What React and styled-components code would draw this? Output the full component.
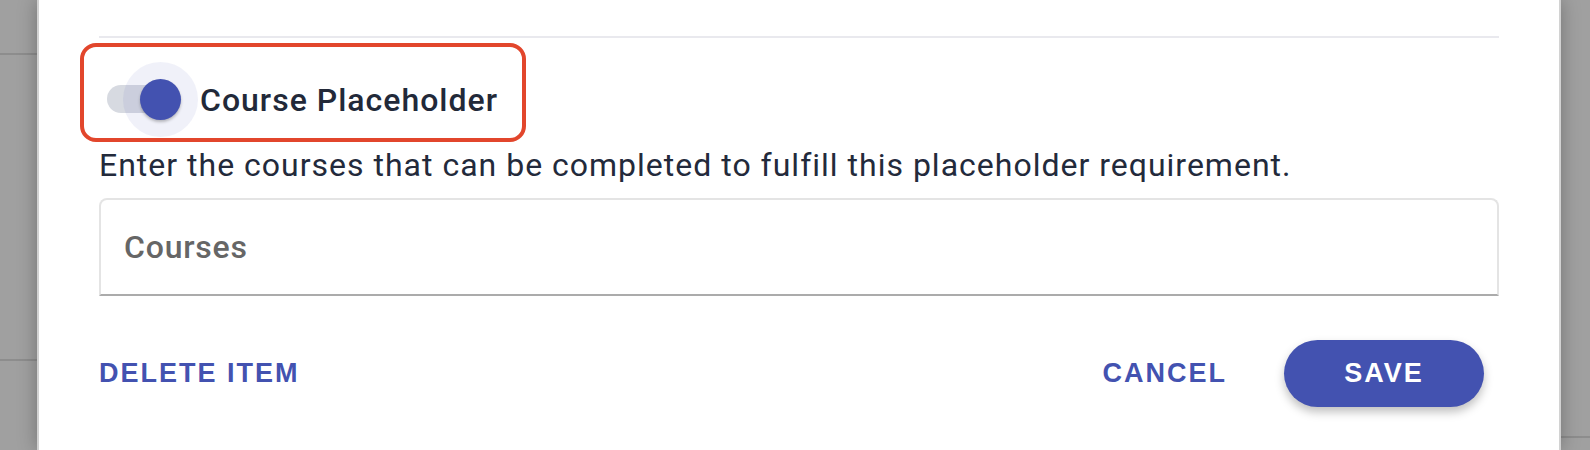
import React from 'react';
import styled, { createGlobalStyle } from 'styled-components';

const GlobalStyle = createGlobalStyle`
  body {
    margin: 0;
    background: #9f9f9f;
    font-family: Roboto, "Liberation Sans", sans-serif;
  }
`;

const Page = styled.div`
  display: flex;
  height: 450px;
  overflow: hidden;
`;

const Backdrop = styled.div`
  width: ${(p) => p.width}px;
  flex-shrink: 0;
  background: ${(p) =>
    p.lineAt.length
      ? p.lineAt
          .map(
            (y) =>
              `linear-gradient(to bottom, transparent ${y}px, #8d8d8d ${y}px, #8d8d8d ${y + 2}px, transparent ${y + 2}px)`
          )
          .join(', ') + ', #a0a0a0'
      : '#a0a0a0'};
`;

const Modal = styled.div`
  flex: 1;
  display: flex;
  flex-direction: column;
  background: #fff;
  border-left: 2px solid #d2d2d2;
  border-right: 2px solid #d2d2d2;
  box-shadow: 0 0 18px rgba(0, 0, 0, 0.28);
  padding: 36px 60px 0 60px;
  position: relative;
  z-index: 1;
`;

const Divider = styled.div`
  height: 2px;
  background: #e9e9ee;
`;

const Highlight = styled.div`
  align-self: flex-start;
  display: inline-flex;
  align-items: center;
  margin: 5px 0 0 -19px;
  padding: 15px 24px 1px 23px;
  border: 4px solid #e2462c;
  border-radius: 16px;
`;

const Switch = styled.div`
  position: relative;
  width: 91px;
  height: 75px;
`;

const Track = styled.div`
  position: absolute;
  left: 0;
  top: 23px;
  width: 68px;
  height: 28px;
  border-radius: 14px;
  background: #d7dae1;
`;

const Halo = styled.div`
  position: absolute;
  left: 16px;
  top: 0;
  width: 75px;
  height: 75px;
  border-radius: 50%;
  background: rgba(63, 81, 181, 0.08);
`;

const Thumb = styled.div`
  position: absolute;
  left: 33px;
  top: 17px;
  width: 41px;
  height: 41px;
  border-radius: 50%;
  background: #4352b0;
  box-shadow: 0 2px 3px rgba(0, 0, 0, 0.25);
`;

const SwitchLabel = styled.span`
  font-size: 32px;
  font-weight: 500;
  color: #222939;
  letter-spacing: 1px;
  margin-left: 2px;
  line-height: 40px;
`;

const Description = styled.p`
  margin: -1px 0 0;
  font-size: 32px;
  line-height: 48px;
  letter-spacing: 1px;
  color: #232a3b;
`;

const Field = styled.div`
  margin-top: 9px;
  height: 94px;
  display: flex;
  align-items: center;
  padding-left: 23px;
  border: 2px solid #e4e4e4;
  border-bottom: 2px solid #ababab;
  border-radius: 8px 8px 0 0;
`;

const FieldLabel = styled.span`
  font-size: 32px;
  font-weight: 500;
  letter-spacing: 0.8px;
  color: #666;
`;

const Actions = styled.div`
  margin-top: 44px;
  display: flex;
  align-items: center;
  padding-right: 15px;
`;

const TextButton = styled.button`
  border: none;
  background: none;
  padding: 0;
  margin-right: ${(p) => p.gap || 0}px;
  font-family: "Liberation Sans", Arial, sans-serif;
  font-weight: 700;
  font-size: 27px;
  letter-spacing: 2px;
  color: #4352b0;
  cursor: pointer;
`;

const Spacer = styled.div`
  flex: 1;
`;

const PrimaryButton = styled.button`
  width: 200px;
  height: 67px;
  border: none;
  border-radius: 34px;
  background: #4352b0;
  color: #fff;
  font-family: "Liberation Sans", Arial, sans-serif;
  font-weight: 700;
  font-size: 27px;
  letter-spacing: 2px;
  box-shadow: 0 5px 10px rgba(0, 0, 0, 0.25);
  cursor: pointer;
`;

export default function App() {
  return (
    <>
      <GlobalStyle />
      <Page>
        <Backdrop width={37} lineAt={[53, 359]} />
        <Modal>
          <Divider />
          <Highlight>
            <Switch>
              <Track />
              <Halo />
              <Thumb />
            </Switch>
            <SwitchLabel>Course Placeholder</SwitchLabel>
          </Highlight>
          <Description>
            Enter the courses that can be completed to fulfill this placeholder requirement.
          </Description>
          <Field>
            <FieldLabel>Courses</FieldLabel>
          </Field>
          <Actions>
            <TextButton>DELETE ITEM</TextButton>
            <Spacer />
            <TextButton gap={57}>CANCEL</TextButton>
            <PrimaryButton>SAVE</PrimaryButton>
          </Actions>
        </Modal>
        <Backdrop width={29} lineAt={[436]} />
      </Page>
    </>
  );
}
